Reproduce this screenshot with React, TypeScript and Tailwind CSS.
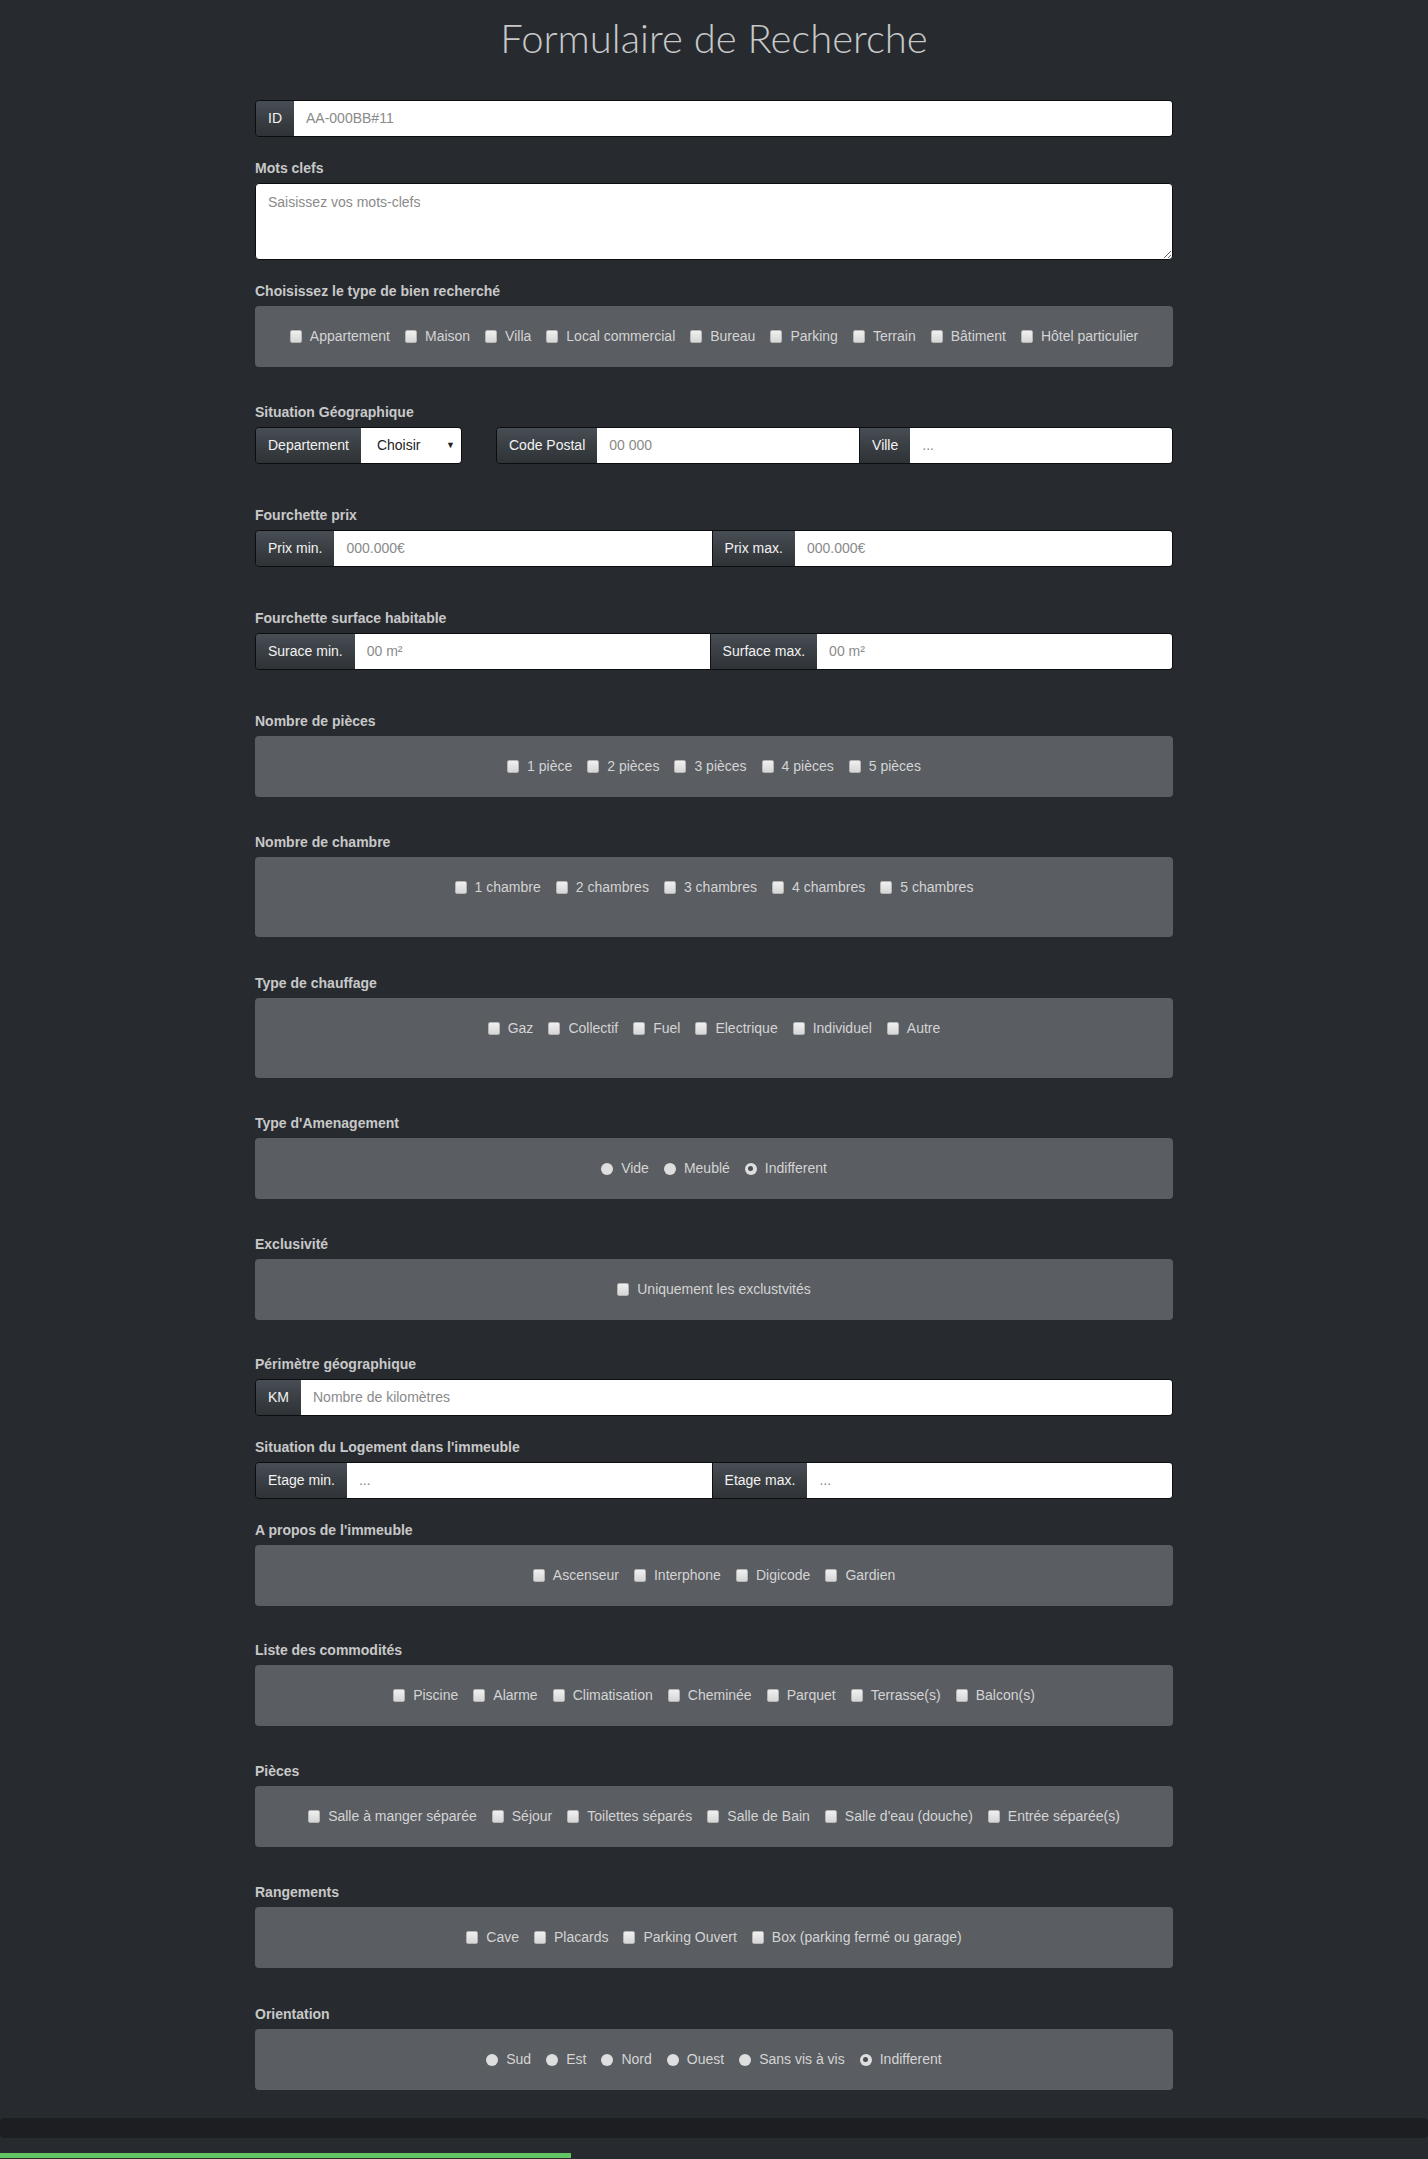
import type { ReactNode } from 'react'

const font = { fontFamily: '"Liberation Sans", Arial, sans-serif' }

function Label({ children, className = '' }: { children: ReactNode; className?: string }) {
  return (
    <div className={`text-[14px] font-bold leading-[20px] text-[#c8c8c8] mb-[5px] ${className}`}>
      {children}
    </div>
  )
}

function Addon({ children }: { children: ReactNode }) {
  return (
    <span className="flex items-center shrink-0 px-3 text-[14px] text-[#f2f2f2] bg-linear-to-b from-[#484e55] via-[#3a3f44] to-[#2f3337]">
      {children}
    </span>
  )
}

function Field({ placeholder, border = false }: { placeholder: string; border?: boolean }) {
  return (
    <input
      type="text"
      placeholder={placeholder}
      className={`flex-1 min-w-0 bg-white px-3 text-[14px] text-[#333] placeholder:text-[#8a8a8a] outline-none ${
        border ? 'border-r border-[#111]' : ''
      }`}
    />
  )
}

function Group({ children, className = '' }: { children: ReactNode; className?: string }) {
  return (
    <div className={`flex h-[37px] rounded-[4px] overflow-hidden border border-[#0c0d0e] ${className}`}>
      {children}
    </div>
  )
}

function Check({ label, radio, checked }: { label: string; radio?: boolean; checked?: boolean }) {
  return (
    <label className="inline-flex items-center gap-[8px]">
      {radio ? (
        <span className="w-[12px] h-[12px] rounded-full bg-[#dedede] flex items-center justify-center">
          {checked && <span className="w-[5px] h-[5px] rounded-full bg-[#4a4d52]" />}
        </span>
      ) : (
        <span className="w-[12px] h-[13px] rounded-[2px] bg-linear-to-b from-[#f0f0f0] to-[#d6d6d6] border border-[#b5b5b5]" />
      )}
      <span>{label}</span>
    </label>
  )
}

function Box({ items, radio, checkedIndex, tall }: { items: string[]; radio?: boolean; checkedIndex?: number; tall?: boolean }) {
  return (
    <div className={`rounded-[4px] bg-[#5a5d62] pt-[20px] ${tall ? 'pb-[39px]' : 'pb-[20px]'}`}>
      <div className="flex flex-wrap justify-center gap-x-[15px] h-[21px] items-center text-[14px] text-[#d4d4d4]">
        {items.map((it, i) => (
          <Check key={it} label={it} radio={radio} checked={checkedIndex === i} />
        ))}
      </div>
    </div>
  )
}

export default function App() {
  return (
    <div className="min-h-[2159px] bg-[#272b30] overflow-hidden" style={font}>
      <div className="w-[918px] mx-auto">
        <h1
          className="pt-[15px] text-center text-[40px] leading-[46px] font-light text-[#c8c8c8]"
          style={{ fontFamily: 'Lato, "Open Sans", sans-serif' }}
        >
          Formulaire de Recherche
        </h1>

        {/* ID */}
        <Group className="mt-[39px]">
          <Addon>ID</Addon>
          <Field placeholder="AA-000BB#11" />
        </Group>

        <Label className="mt-[21px]">Mots clefs</Label>
        <textarea
          placeholder="Saisissez vos mots-clefs"
          className="block w-full h-[77px] rounded-[4px] border border-[#0c0d0e] bg-white px-3 py-[8px] text-[14px] text-[#333] placeholder:text-[#8a8a8a] outline-none"
        />

        <Label className="mt-[21px]">Choisissez le type de bien recherché</Label>
        <Box
          items={['Appartement', 'Maison', 'Villa', 'Local commercial', 'Bureau', 'Parking', 'Terrain', 'Bâtiment', 'Hôtel particulier']}
        />

        <Label className="mt-[35px]">Situation Géographique</Label>
        <div className="flex">
          <Group className="w-[207px]">
            <Addon>Departement</Addon>
            <div className="relative flex-1 bg-white">
              <select className="appearance-none w-full h-full bg-white pl-[16px] text-[14px] text-[#222] outline-none">
                <option>Choisir</option>
              </select>
              <span className="absolute right-[6px] top-[11px] text-[9px] text-[#222] pointer-events-none">▼</span>
            </div>
          </Group>
          <Group className="ml-[34px] flex-1">
            <Addon>Code Postal</Addon>
            <Field placeholder="00 000" border />
            <Addon>Ville</Addon>
            <Field placeholder="..." />
          </Group>
        </div>

        <Label className="mt-[41px]">Fourchette prix</Label>
        <Group>
          <Addon>Prix min.</Addon>
          <Field placeholder="000.000€" border />
          <Addon>Prix max.</Addon>
          <Field placeholder="000.000€" />
        </Group>

        <Label className="mt-[41px]">Fourchette surface habitable</Label>
        <Group>
          <Addon>Surace min.</Addon>
          <Field placeholder="00 m²" border />
          <Addon>Surface max.</Addon>
          <Field placeholder="00 m²" />
        </Group>

        <Label className="mt-[41px]">Nombre de pièces</Label>
        <Box items={['1 pièce', '2 pièces', '3 pièces', '4 pièces', '5 pièces']} />

        <Label className="mt-[35px]">Nombre de chambre</Label>
        <Box items={['1 chambre', '2 chambres', '3 chambres', '4 chambres', '5 chambres']} tall />

        <Label className="mt-[36px]">Type de chauffage</Label>
        <Box items={['Gaz', 'Collectif', 'Fuel', 'Electrique', 'Individuel', 'Autre']} tall />

        <Label className="mt-[35px]">Type d'Amenagement</Label>
        <Box items={['Vide', 'Meublé', 'Indifferent']} radio checkedIndex={2} />

        <Label className="mt-[35px]">Exclusivité</Label>
        <Box items={['Uniquement les exclustvités']} />

        <Label className="mt-[34px]">Périmètre géographique</Label>
        <Group>
          <Addon>KM</Addon>
          <Field placeholder="Nombre de kilomètres" />
        </Group>

        <Label className="mt-[21px]">Situation du Logement dans l'immeuble</Label>
        <Group>
          <Addon>Etage min.</Addon>
          <Field placeholder="..." border />
          <Addon>Etage max.</Addon>
          <Field placeholder="..." />
        </Group>

        <Label className="mt-[21px]">A propos de l'immeuble</Label>
        <Box items={['Ascenseur', 'Interphone', 'Digicode', 'Gardien']} />

        <Label className="mt-[34px]">Liste des commodités</Label>
        <Box items={['Piscine', 'Alarme', 'Climatisation', 'Cheminée', 'Parquet', 'Terrasse(s)', 'Balcon(s)']} />

        <Label className="mt-[35px]">Pièces</Label>
        <Box
          items={['Salle à manger séparée', 'Séjour', 'Toilettes séparés', 'Salle de Bain', "Salle d'eau (douche)", 'Entrée séparée(s)']}
        />

        <Label className="mt-[35px]">Rangements</Label>
        <Box items={['Cave', 'Placards', 'Parking Ouvert', 'Box (parking fermé ou garage)']} />

        <Label className="mt-[36px]">Orientation</Label>
        <Box items={['Sud', 'Est', 'Nord', 'Ouest', 'Sans vis à vis', 'Indifferent']} radio checkedIndex={5} />
      </div>

      {/* footer band + progress */}
      <div className="mt-[28px] h-[20px] rounded-[4px] bg-[#1c1e22]" />
      <div className="mt-[15px] h-[5px] w-[40%] bg-[#62c462]" />
    </div>
  )
}
